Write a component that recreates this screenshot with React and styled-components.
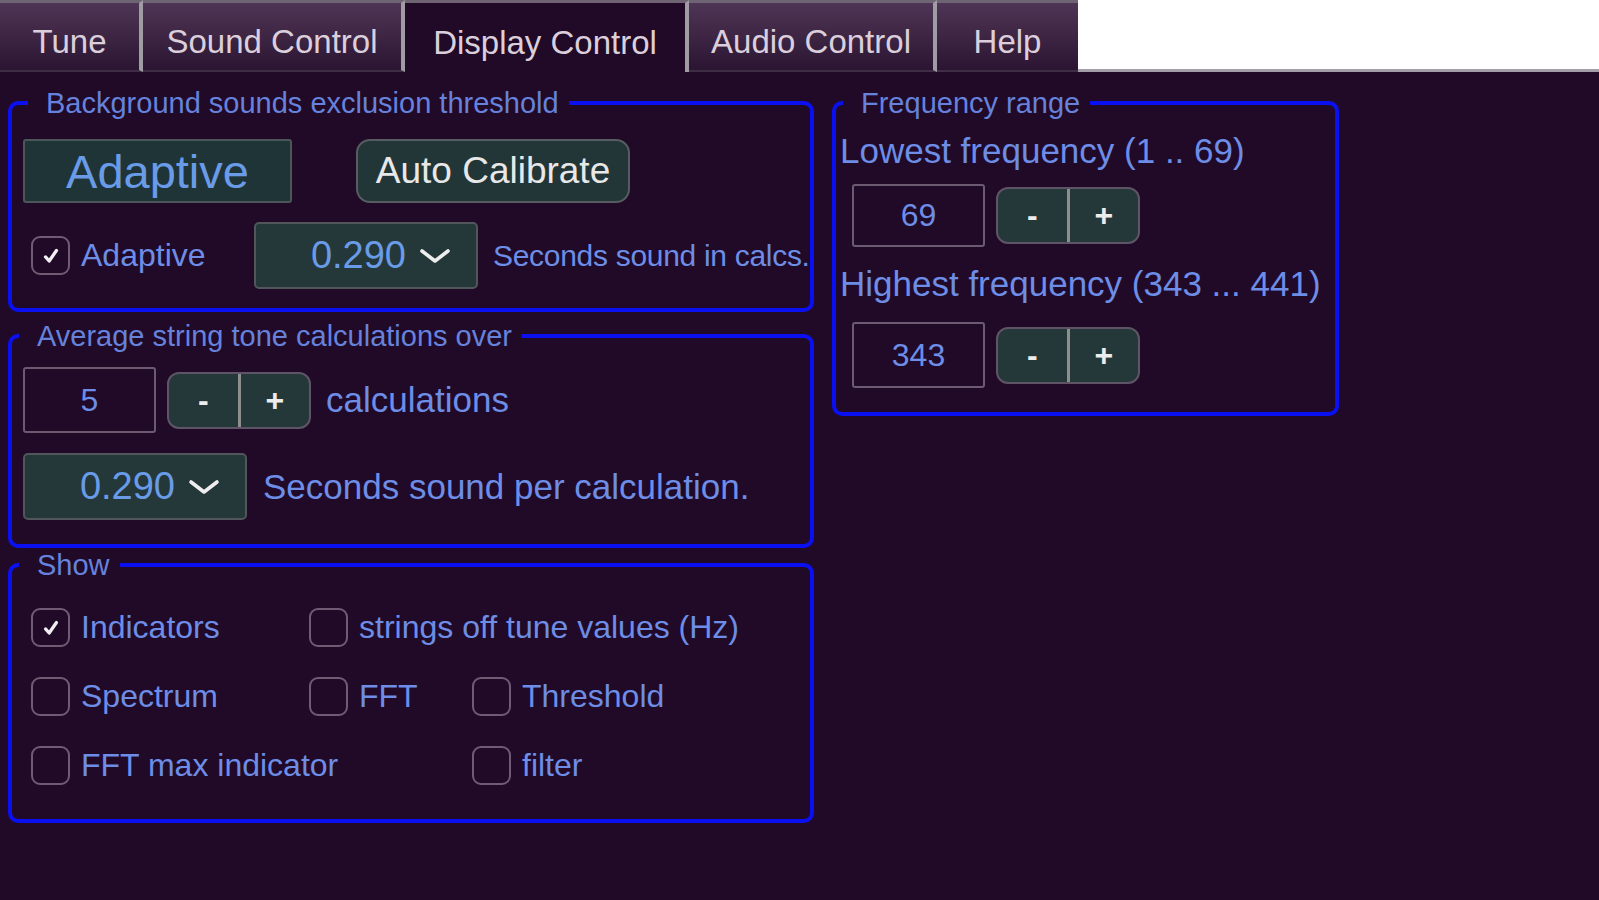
import React from "react";
import styled, { createGlobalStyle } from "styled-components";

const GlobalStyle = createGlobalStyle`
  html, body {
    margin: 0;
    padding: 0;
    background: #200a27;
  }
  body {
    font-family: "Liberation Sans", Arial, Helvetica, sans-serif;
    width: 1599px;
    height: 900px;
    overflow: hidden;
  }
`;

const tabs = [
  { label: "Tune", width: 143 },
  { label: "Sound Control", width: 262 },
  { label: "Display Control", width: 284, active: true },
  { label: "Audio Control", width: 248 },
  { label: "Help", width: 141, last: true },
];

const showOptions = [
  { label: "Indicators", checked: true, col: "1", row: 1 },
  { label: "strings off tune values (Hz)", col: "2 / span 2", row: 1 },
  { label: "Spectrum", col: "1", row: 2 },
  { label: "FFT", col: "2", row: 2 },
  { label: "Threshold", col: "3", row: 2 },
  { label: "FFT max indicator", col: "1 / span 2", row: 3 },
  { label: "filter", col: "3", row: 3 },
];

const App = () => {
  return (
    <>
      <GlobalStyle />
      <TabBar>
        {tabs.map((t) => (
          <Tab key={t.label} w={t.width} active={t.active} last={t.last}>
            {t.label}
          </Tab>
        ))}
        <TabFiller />
      </TabBar>

      <Main>
        <Column>
          <Group>
            <Legend offset={16}>Background sounds exclusion threshold</Legend>
            <GroupBody pad="20px 11px 19px 11px" gap={19}>
              <Row gap={64}>
                <ModeButton>Adaptive</ModeButton>
                <CalibrateButton>Auto Calibrate</CalibrateButton>
              </Row>
              <Row gap={0}>
                <CheckItem w={231} indent={8}>
                  <CheckBox checked />
                  <SmallLabel>Adaptive</SmallLabel>
                </CheckItem>
                <Select value="0.290" />
                <SmallLabel tight indent={15}>
                  Seconds sound in calcs.
                </SmallLabel>
              </Row>
            </GroupBody>
          </Group>

          <Group top={8}>
            <Legend offset={7}>Average string tone calculations over</Legend>
            <GroupBody pad="15px 11px 24px 11px" gap={20}>
              <Row gap={11}>
                <NumberBox w={133} h={66}>5</NumberBox>
                <Stepper />
                <Label indent={4}>calculations</Label>
              </Row>
              <Row gap={16}>
                <Select value="0.290" />
                <Label>Seconds sound per calculation.</Label>
              </Row>
            </GroupBody>
          </Group>

          <Group top={1}>
            <Legend offset={7}>Show</Legend>
            <ShowGrid>
              {showOptions.map((o) => (
                <CheckItem
                  key={o.label}
                  style={{ gridColumn: o.col, gridRow: o.row }}
                >
                  <CheckBox checked={o.checked} />
                  <SmallLabel>{o.label}</SmallLabel>
                </CheckItem>
              ))}
            </ShowGrid>
          </Group>
        </Column>

        <Group w={507}>
          <Legend offset={7}>Frequency range</Legend>
          <GroupBody pad="12px 4px 24px 4px" gap={0}>
            <Label>Lowest frequency (1 .. 69)</Label>
            <Row gap={11} indent={12} top={13}>
              <NumberBox w={133} h={63}>69</NumberBox>
              <Stepper />
            </Row>
            <Label top={17}>Highest frequency (343 ... 441)</Label>
            <Row gap={11} indent={12} top={18}>
              <NumberBox w={133} h={66}>343</NumberBox>
              <Stepper />
            </Row>
          </GroupBody>
        </Group>
      </Main>
    </>
  );
};

export default App;

const CheckBox = ({ checked }) => (
  <Box>
    {checked && (
      <svg width="20" height="20" viewBox="0 0 22 22">
        <path
          d="M5 12 L9 16.5 L17 5"
          fill="none"
          stroke="#f2eef2"
          strokeWidth="3.6"
          strokeLinecap="round"
          strokeLinejoin="round"
        />
      </svg>
    )}
  </Box>
);

const Select = ({ value }) => (
  <SelectBox>
    <span>{value}</span>
    <svg width="34" height="20" viewBox="0 0 34 20">
      <path
        d="M4 5 L17 15 L30 5"
        fill="none"
        stroke="#eeeeee"
        strokeWidth="3.6"
        strokeLinecap="round"
        strokeLinejoin="round"
      />
    </svg>
  </SelectBox>
);

const Stepper = () => (
  <StepperWrap>
    <StepButton>-</StepButton>
    <StepDivider />
    <StepButton>+</StepButton>
  </StepperWrap>
);

const TabBar = styled.nav`
  display: flex;
  height: 72px;
  box-sizing: border-box;
`;

const Tab = styled.div`
  flex: none;
  width: ${(p) => p.w}px;
  box-sizing: border-box;
  display: flex;
  align-items: center;
  justify-content: center;
  padding-top: 10px;
  border-top: 3px solid #6e6474;
  border-right: ${(p) => (p.last ? "none" : "4px solid #a09ca4")};
  border-bottom: ${(p) => (p.active ? "none" : "2px solid #3f2d46")};
  background: ${(p) =>
    p.active ? "#200a27" : "linear-gradient(#4f3555, #2b1532)"};
  color: #dccfdc;
  font-size: 33px;
  white-space: nowrap;
`;

const TabFiller = styled.div`
  flex: 1;
  background: #ffffff;
  border-bottom: 3px solid #a49ea8;
`;

const Main = styled.main`
  display: flex;
  align-items: flex-start;
  gap: 18px;
  padding: 15px 0 0 8px;
`;

const Column = styled.div`
  display: flex;
  flex-direction: column;
  width: 806px;
`;

const Group = styled.fieldset`
  margin: ${(p) => p.top || 0}px 0 0 0;
  padding: 0;
  min-width: 0;
  box-sizing: border-box;
  width: ${(p) => p.w || 806}px;
  border: 4px solid #0b10f0;
  border-radius: 10px;
`;

const Legend = styled.legend`
  margin-left: ${(p) => p.offset}px;
  padding: 0 10px 0 18px;
  color: #6682dc;
  font-size: 29px;
  line-height: 32px;
`;

const GroupBody = styled.div`
  display: flex;
  flex-direction: column;
  gap: ${(p) => p.gap}px;
  padding: ${(p) => p.pad};
`;

const Row = styled.div`
  display: flex;
  align-items: center;
  gap: ${(p) => p.gap}px;
  margin-left: ${(p) => p.indent || 0}px;
  margin-top: ${(p) => p.top || 0}px;
`;

const Label = styled.span`
  color: #6d8de6;
  font-size: 35px;
  line-height: 40px;
  white-space: nowrap;
  margin-left: ${(p) => p.indent || 0}px;
  margin-top: ${(p) => p.top || 0}px;
`;

const SmallLabel = styled.span`
  color: #6d8de6;
  font-size: ${(p) => (p.tight ? 30 : 32)}px;
  letter-spacing: ${(p) => (p.tight ? "-0.3px" : "0")};
  margin-left: ${(p) => p.indent || 0}px;
  white-space: nowrap;
`;

const ModeButton = styled.button`
  width: 269px;
  height: 64px;
  box-sizing: border-box;
  background: #1f3436;
  border: 2px solid #4c5658;
  border-radius: 3px;
  color: #6a9be8;
  font-family: inherit;
  font-size: 47px;
  padding: 0;
`;

const CalibrateButton = styled.button`
  width: 274px;
  height: 64px;
  box-sizing: border-box;
  background: #223638;
  border: 2px solid #565c60;
  border-radius: 14px;
  color: #e8e8e8;
  font-family: inherit;
  font-size: 37px;
  padding: 0;
`;

const CheckItem = styled.label`
  display: flex;
  align-items: center;
  gap: 11px;
  flex: none;
  width: ${(p) => (p.w ? `${p.w}px` : "auto")};
  box-sizing: border-box;
  padding-left: ${(p) => p.indent || 0}px;
`;

const Box = styled.span`
  width: 39px;
  height: 39px;
  flex: none;
  box-sizing: border-box;
  border: 2px solid #725a74;
  border-radius: 9px;
  display: flex;
  align-items: center;
  justify-content: center;
`;

const SelectBox = styled.div`
  width: 224px;
  height: 67px;
  flex: none;
  box-sizing: border-box;
  background: #24383a;
  border: 2px solid #50565a;
  border-radius: 5px;
  display: flex;
  align-items: center;
  justify-content: flex-end;
  gap: 12px;
  padding-right: 24px;
  color: #6a9be8;
  font-size: 38px;
`;

const NumberBox = styled.div`
  width: ${(p) => p.w}px;
  height: ${(p) => p.h}px;
  flex: none;
  box-sizing: border-box;
  border: 2px solid #6b5a70;
  border-radius: 3px;
  display: flex;
  align-items: center;
  justify-content: center;
  color: #6d8de6;
  font-size: 32px;
`;

const StepperWrap = styled.div`
  width: 144px;
  height: 57px;
  flex: none;
  box-sizing: border-box;
  display: flex;
  background: #243739;
  border: 2px solid #5e5466;
  border-radius: 12px;
  overflow: hidden;
`;

const StepButton = styled.div`
  flex: 1;
  display: flex;
  align-items: center;
  justify-content: center;
  color: #ececec;
  font-size: 32px;
  font-weight: bold;
`;

const StepDivider = styled.div`
  width: 3px;
  background: #8e8e8e;
`;

const ShowGrid = styled.div`
  display: grid;
  grid-template-columns: 278px 163px auto;
  grid-auto-rows: 39px;
  row-gap: 30px;
  padding: 27px 19px 34px 19px;
`;
